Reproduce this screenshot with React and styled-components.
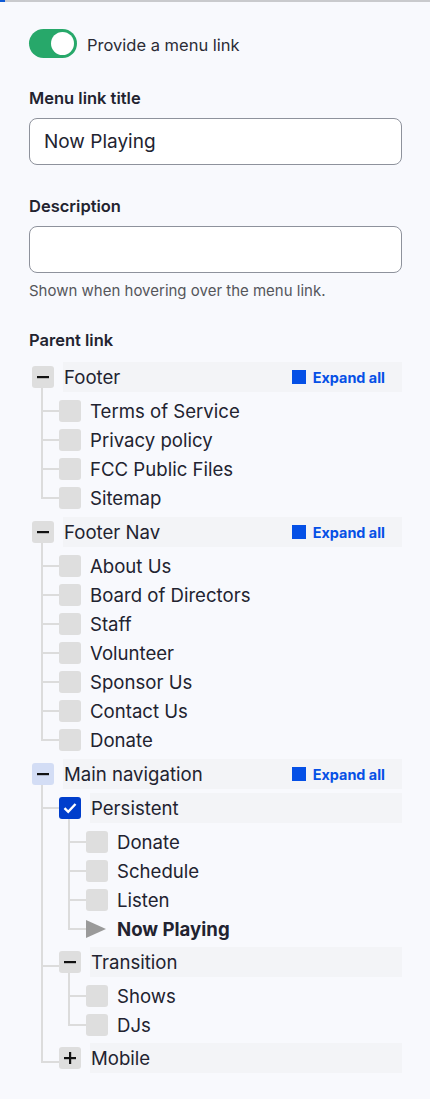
import React from "react";
import styled, { createGlobalStyle } from "styled-components";

const GlobalStyle = createGlobalStyle`
  html, body {
    margin: 0;
    padding: 0;
    background: #f8f9fd;
  }
  body {
    font-family: Inter, "Noto Sans", "Liberation Sans", sans-serif;
    color: #222330;
    -webkit-font-smoothing: antialiased;
  }
  * { box-sizing: border-box; }
`;

const tree = [
  {
    title: "Footer",
    expandAll: true,
    open: true,
    children: [
      { title: "Terms of Service" },
      { title: "Privacy policy" },
      { title: "FCC Public Files" },
      { title: "Sitemap" },
    ],
  },
  {
    title: "Footer Nav",
    expandAll: true,
    open: true,
    children: [
      { title: "About Us" },
      { title: "Board of Directors" },
      { title: "Staff" },
      { title: "Volunteer" },
      { title: "Sponsor Us" },
      { title: "Contact Us" },
      { title: "Donate" },
    ],
  },
  {
    title: "Main navigation",
    expandAll: true,
    open: true,
    hover: true,
    children: [
      {
        title: "Persistent",
        checked: true,
        open: true,
        children: [
          { title: "Donate" },
          { title: "Schedule" },
          { title: "Listen" },
          { title: "Now Playing", current: true },
        ],
      },
      {
        title: "Transition",
        open: true,
        children: [{ title: "Shows" }, { title: "DJs" }],
      },
      { title: "Mobile", open: false, children: [] },
    ],
  },
];

const App = () => {
  return (
    <>
      <GlobalStyle />
      <TopEdge>
        <TopAccent />
      </TopEdge>
      <Page>
        <SwitchRow>
          <Switch>
            <Knob />
          </Switch>
          <SwitchText>Provide a menu link</SwitchText>
        </SwitchRow>

        <Field>
          <FieldLabel>Menu link title</FieldLabel>
          <TextInput defaultValue="Now Playing" />
        </Field>

        <Field $top={31}>
          <FieldLabel>Description</FieldLabel>
          <TextInput defaultValue="" />
          <Help>Shown when hovering over the menu link.</Help>
        </Field>

        <Field $top={30}>
          <FieldLabel>Parent link</FieldLabel>
          <Tree>
            {tree.map((node, i) => (
              <TreeNode key={node.title} node={node} level={0} first={i === 0} />
            ))}
          </Tree>
        </Field>
      </Page>
    </>
  );
};

const TreeNode = ({ node, level, first, last }) => {
  const isGroup = Array.isArray(node.children);
  let marginTop = 0;
  if (isGroup && !first) marginTop = level === 0 ? 5 : 4;
  const center = isGroup ? marginTop + 15 : 14.5;

  return (
    <Item $nested={level > 0} $last={last} $center={center}>
      {isGroup ? (
        <GroupRow $mt={marginTop}>
          <Marker node={node} />
          <GroupBar>
            <NodeText>{node.title}</NodeText>
            {node.expandAll && (
              <ExpandAll>
                <ExpandSquare />
                Expand all
              </ExpandAll>
            )}
          </GroupBar>
        </GroupRow>
      ) : (
        <LeafRow>
          {node.current ? <Arrow /> : <Box />}
          <NodeText $bold={node.current}>{node.title}</NodeText>
        </LeafRow>
      )}
      {isGroup && node.open && node.children.length > 0 && (
        <Children>
          {node.children.map((child, i) => (
            <TreeNode
              key={child.title}
              node={child}
              level={level + 1}
              first={i === 0}
              last={i === node.children.length - 1}
            />
          ))}
        </Children>
      )}
    </Item>
  );
};

const Marker = ({ node }) => {
  if (node.checked) {
    return (
      <Box $checked>
        <svg width="14" height="12" viewBox="0 0 14 12">
          <path d="M1.5 6.2 L5.2 9.8 L12.5 2" fill="none" stroke="#fff" strokeWidth="2.4" />
        </svg>
      </Box>
    );
  }
  return (
    <Box $hover={node.hover}>
      <svg width="12" height="12" viewBox="0 0 12 12">
        <rect x="0" y="5" width="12" height="2.2" fill="#111" />
        {!node.open && <rect x="5" y="0" width="2.2" height="12" fill="#111" />}
      </svg>
    </Box>
  );
};

const Arrow = () => (
  <ArrowBox>
    <svg width="20" height="18" viewBox="0 0 20 18">
      <path d="M0 0 L20 9 L0 18 Z" fill="#9a9a9a" />
    </svg>
  </ArrowBox>
);

export default App;

const TopEdge = styled.div`
  display: flex;
  height: 2px;
  background: #c9cacd;
`;

const TopAccent = styled.div`
  width: 5px;
  background: #0f5bd6;
`;

const Page = styled.div`
  padding: 27px 28px 40px 29px;
`;

const SwitchRow = styled.div`
  display: flex;
  align-items: center;
  gap: 10px;
`;

const Switch = styled.div`
  display: flex;
  align-items: center;
  justify-content: flex-end;
  width: 48px;
  height: 29px;
  padding: 0 3px;
  border-radius: 15px;
  background: #27a86a;
`;

const Knob = styled.div`
  width: 23px;
  height: 23px;
  border-radius: 50%;
  background: #fff;
`;

const SwitchText = styled.span`
  font-size: 16.5px;
  line-height: 20px;
  margin-top: 2px;
  color: #2b2c36;
`;

const Field = styled.div`
  display: flex;
  flex-direction: column;
  margin-top: ${(p) => p.$top ?? 30}px;
`;

const FieldLabel = styled.label`
  font-size: 16.5px;
  font-weight: 600;
  line-height: 20px;
  margin-bottom: 10px;
  color: #222330;
`;

const TextInput = styled.input`
  width: 100%;
  height: 47px;
  padding: 0 14px;
  border: 1px solid #8e929c;
  border-radius: 8px;
  background: #fff;
  font-family: inherit;
  font-size: 19px;
  color: #222330;
  outline: none;
`;

const Help = styled.div`
  margin-top: 9px;
  font-size: 15px;
  line-height: 18px;
  color: #55565b;
`;

const Tree = styled.ul`
  list-style: none;
  margin: 2px 0 0 3px;
  padding: 0;
`;

const Children = styled.ul`
  list-style: none;
  margin: 0;
  padding: 4px 0 0 27px;
`;

const Item = styled.li`
  position: relative;

  ${(p) =>
    p.$nested &&
    `
    &::before {
      content: "";
      position: absolute;
      left: -18px;
      top: -10px;
      width: 2px;
      height: ${p.$last ? `calc(${p.$center}px + 11px)` : "calc(100% + 10px)"};
      background: #dcdcdc;
    }
    &::after {
      content: "";
      position: absolute;
      left: -18px;
      top: ${p.$center - 1}px;
      width: 18px;
      height: 2px;
      background: #dcdcdc;
    }
  `}
`;

const GroupRow = styled.div`
  display: flex;
  align-items: center;
  margin-top: ${(p) => p.$mt}px;
`;

const GroupBar = styled.div`
  flex: 1;
  display: flex;
  align-items: center;
  justify-content: space-between;
  height: 30px;
  margin-left: 9px;
  padding: 0 17px 0 1px;
  background: #f3f4f7;
`;

const LeafRow = styled.div`
  display: flex;
  align-items: center;
  gap: 9px;
  height: 29px;
`;

const Box = styled.span`
  position: relative;
  z-index: 1;
  display: flex;
  align-items: center;
  justify-content: center;
  flex: none;
  width: 22px;
  height: 22px;
  border-radius: 3px;
  background: ${(p) => (p.$checked ? "#003ecc" : p.$hover ? "#d3ddf5" : "#dedede")};
`;

const ArrowBox = styled.span`
  display: flex;
  align-items: center;
  width: 22px;
  flex: none;
`;

const NodeText = styled.span`
  font-size: 18.6px;
  line-height: 22px;
  font-weight: ${(p) => (p.$bold ? 700 : 400)};
  color: #222330;
`;

const ExpandAll = styled.span`
  display: flex;
  align-items: center;
  gap: 7px;
  font-size: 14.4px;
  font-weight: 700;
  color: #0550e6;
`;

const ExpandSquare = styled.span`
  width: 14px;
  height: 14px;
  background: #0550e6;
`;
